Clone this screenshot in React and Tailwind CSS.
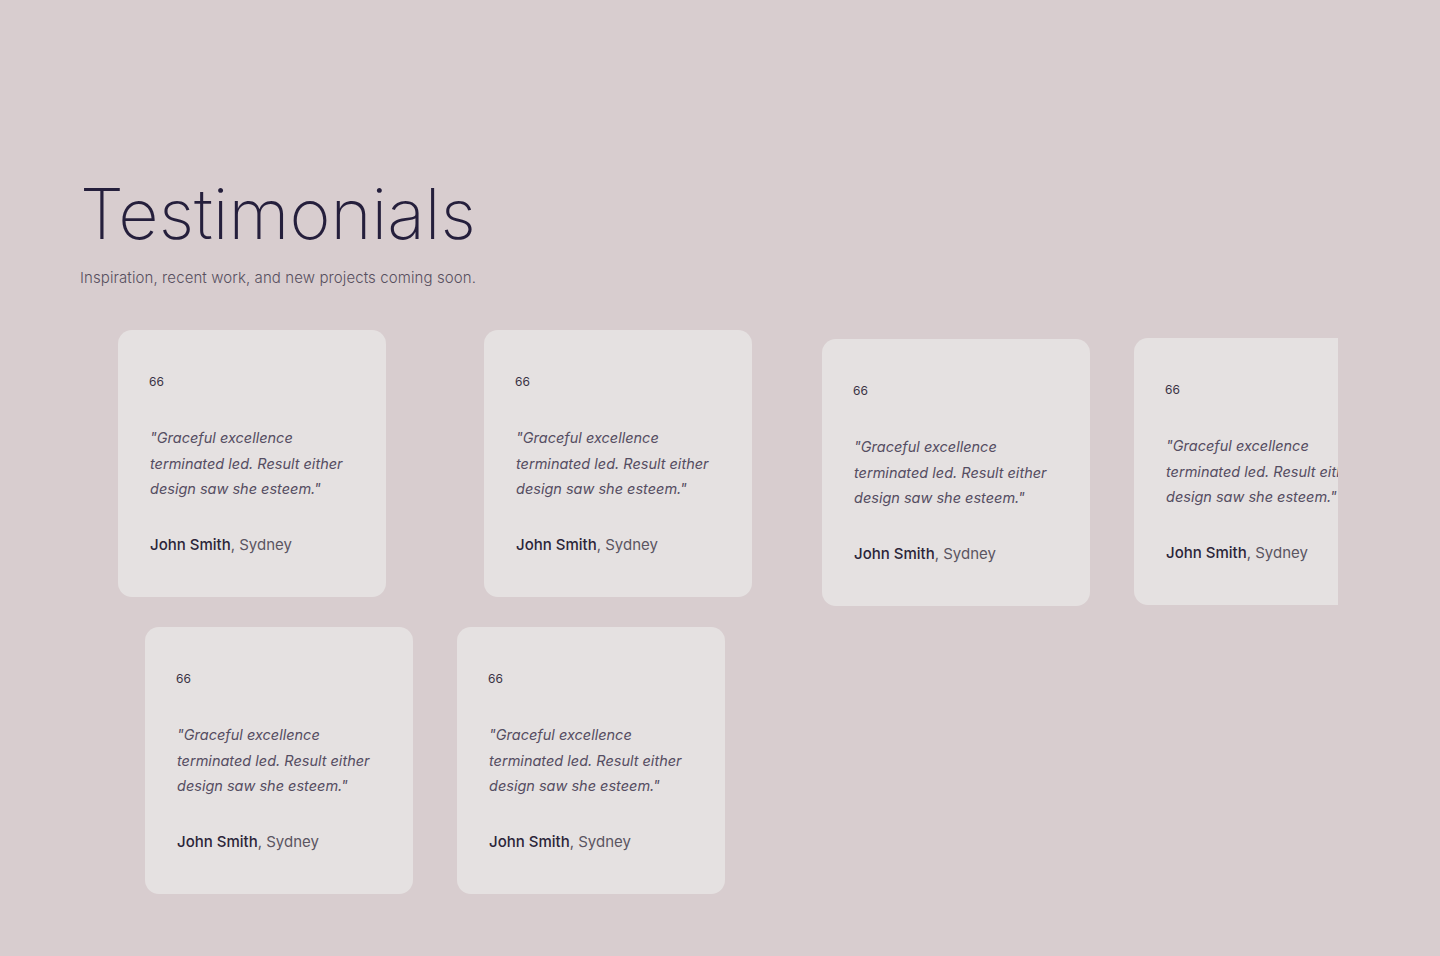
import React from "react";

function Card({ className = "" }) {
  return (
    <div
      className={`w-[268px] h-[267px] shrink-0 rounded-[14px] bg-[#e5e1e1] pl-8 pr-4 pt-[44px] ${className}`}
    >
      <div className="text-[12px] leading-[16px] text-[#3a3345] -ml-px">66</div>
      <p className="mt-[35px] text-[14.5px] leading-[25.5px] italic text-[#554d62] whitespace-nowrap">
        "Graceful excellence<br />terminated led. Result either<br />design saw she esteem."
      </p>
      <div className="mt-[31px] text-[15px] leading-[24px] whitespace-nowrap">
        <span className="font-medium text-[#2b2539]">John Smith</span>
        <span className="text-[#5b5561]">, Sydney</span>
      </div>
    </div>
  );
}

export default function App() {
  return (
    <div
      className="min-h-[956px] w-full bg-[#d8cdcf] pt-[170px]"
      style={{ fontFamily: "Inter, 'Noto Sans', sans-serif" }}
    >
      <div className="pl-20">
        <h1 className="text-[70px] leading-[88px] font-extralight text-[#251f3c]">
          Testimonials
        </h1>
        <p className="mt-[10px] text-[15px] leading-[20px] font-light text-[#574f5e] tracking-[0.1px]">
          Inspiration, recent work, and new projects coming soon.
        </p>
      </div>
      <div className="mt-[42px] ml-20 w-[1258px] overflow-hidden">
        <div className="flex items-start">
          <Card className="ml-[38px]" />
          <Card className="ml-[98px]" />
          <Card className="ml-[70px] mt-[9px]" />
          <Card className="ml-[44px] mt-[8px]" />
        </div>
        <div className="flex items-start mt-[21px]">
          <Card className="ml-[65px]" />
          <Card className="ml-[44px]" />
        </div>
      </div>
    </div>
  );
}
